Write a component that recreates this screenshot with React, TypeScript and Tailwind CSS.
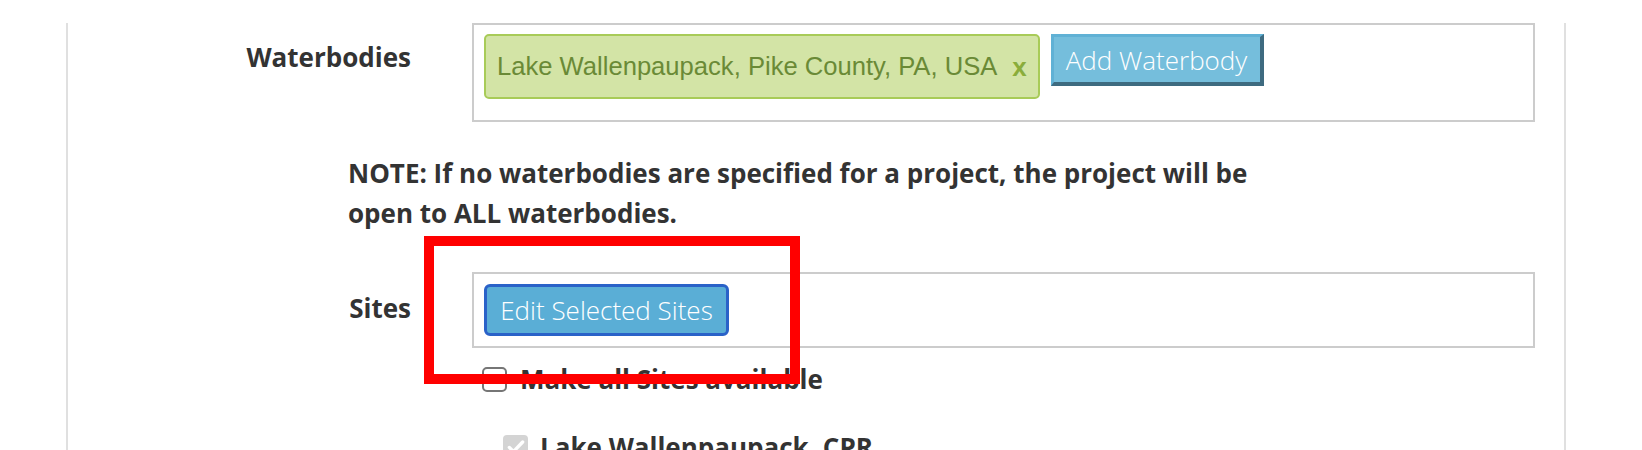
const openSans = { fontFamily: '"Open Sans", "Liberation Sans", sans-serif' };

function FieldLabel({ children, top }: { children: React.ReactNode; top: string }) {
  return (
    <div
      style={openSans}
      className={`w-[343px] shrink-0 text-right text-[26px] font-bold leading-[36px] text-[#333333] ${top}`}
    >
      {children}
    </div>
  );
}

function WaterbodyTag({ name }: { name: string }) {
  return (
    <div className="flex h-[65px] items-center rounded-[5px] border-2 border-[#a8cb58] bg-[#d3e4a6] pl-[11px] pr-[11px]">
      <span
        style={{ fontFamily: '"Liberation Sans", Arial, sans-serif' }}
        className="text-[25.6px] leading-none text-[#6a8a36]"
      >
        {name}
      </span>
      <span
        style={{ fontFamily: '"Liberation Sans", Arial, sans-serif' }}
        className="ml-[15px] text-[26px] font-bold leading-none text-[#8aad3b]"
      >
        x
      </span>
    </div>
  );
}

function App() {
  return (
    <div className="relative h-[450px] w-full overflow-hidden bg-white">
      <div className="ml-[66px] h-full w-[1500px] border-x-2 border-[#e0e0e0]">
        {/* waterbodies */}
        <div className="mt-[23px] flex">
          <FieldLabel top="pt-[16px]">Waterbodies</FieldLabel>
          <div className="ml-[61px] flex h-[99px] w-[1063px] items-start gap-[11px] border-2 border-[#cccccc] px-[10px] pt-[9px]">
            <WaterbodyTag name="Lake Wallenpaupack, Pike County, PA, USA" />
            <button
              style={openSans}
              className="flex h-[52px] w-[213px] items-center border-t-[3px] border-l-[3px] border-r-4 border-b-4 border-t-[#60b1d5] border-l-[#60b1d5] border-r-[#3e6b80] border-b-[#3e6b80] bg-[#75bedc] pl-[12px] text-[26px] font-light leading-none text-white"
            >
              Add Waterbody
            </button>
          </div>
        </div>

        {/* note */}
        <p
          style={openSans}
          className="ml-[280px] mt-[31px] text-[26px] font-bold leading-[40px] text-[#333333]"
        >
          NOTE: If no waterbodies are specified for a project, the project will be
          <br />
          open to ALL waterbodies.
        </p>

        {/* sites */}
        <div className="mt-[39px] flex">
          <FieldLabel top="pt-[18px]">Sites</FieldLabel>
          <div className="ml-[61px] h-[76px] w-[1063px] border-2 border-[#cccccc] p-[10px]">
            <button
              style={openSans}
              className="flex h-[52px] w-[245px] items-center justify-center rounded-[6px] border-[3px] border-[#2a62c8] bg-[#5aaed6] text-[26px] font-light leading-none text-white"
            >
              Edit Selected Sites
            </button>
          </div>
        </div>

        <div className="ml-[414px] mt-[16px] flex items-center gap-[13px]">
          <span className="h-[25px] w-[25px] rounded-[5px] border-2 border-[#767676] bg-white" />
          <span style={openSans} className="text-[26px] font-bold leading-[30px] text-[#333333]">
            Make all Sites available
          </span>
        </div>

        <div className="ml-[435px] mt-[38px] flex items-center gap-[12px]">
          <span className="flex h-[25px] w-[25px] items-center justify-center rounded-[4px] bg-[#d4d4d4]">
            <svg viewBox="0 0 24 24" className="h-[20px] w-[20px]" fill="none" stroke="white" strokeWidth="4" strokeLinecap="round" strokeLinejoin="round">
              <path d="M4 12.5l5 5L20 6" />
            </svg>
          </span>
          <span style={openSans} className="text-[26px] font-bold leading-[30px] text-[#333333]">
            Lake Wallenpaupack, CPR
          </span>
        </div>
      </div>

      {/* red highlight drawn over the sites field */}
      <div className="pointer-events-none absolute left-[424px] top-[236px] h-[148px] w-[376px] border-[10px] border-[#ff0000]" />
    </div>
  );
}

export default App;
